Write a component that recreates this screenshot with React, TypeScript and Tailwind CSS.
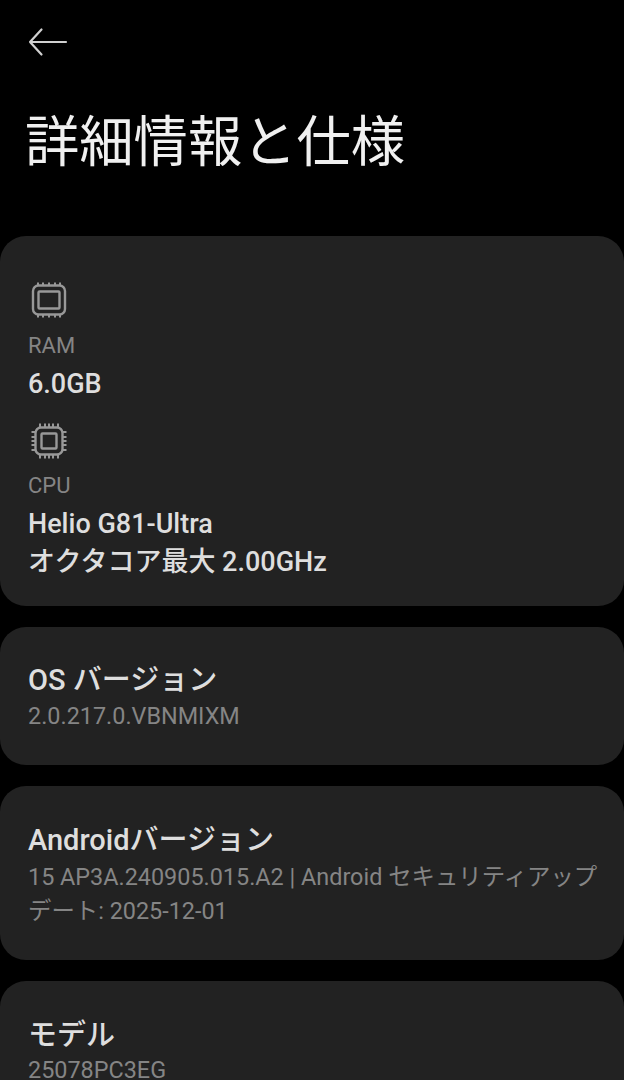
const FONT = "font-['Roboto','Noto_Sans_CJK_JP',sans-serif]";

// ── Inline SVG icons ──────────────────────────────────────────────────────────
function IconRam() {
  return (
    <svg viewBox="0 0 36 36" fill="none" className="w-9 h-9 block ml-[3px]" aria-hidden="true" stroke="#989898">
      <rect x="2" y="3.5" width="32" height="29" rx="5.5" strokeWidth="2.4" />
      <rect x="7.5" y="9.5" width="21" height="17" rx="1" strokeWidth="2.4" />
      <path d="M7 0.5v3M12 0.5v3M18 0.5v3M24 0.5v3M29 0.5v3M7 32.5v3M12 32.5v3M18 32.5v3M24 32.5v3M29 32.5v3" strokeWidth="2" />
    </svg>
  );
}

function IconCpu() {
  return (
    <svg viewBox="0 0 36 36" fill="none" className="w-9 h-9 block ml-[3px]" aria-hidden="true" stroke="#989898">
      <rect x="4.5" y="4.5" width="27" height="27" rx="5.5" strokeWidth="2.4" />
      <rect x="10.5" y="10.5" width="15" height="15" rx="1" strokeWidth="2.4" />
      <path d="M9 0.5v4M14 0.5v4M18 0.5v4M22 0.5v4M27 0.5v4M9 31.5v4M14 31.5v4M18 31.5v4M22 31.5v4M27 31.5v4M0.5 9h4M0.5 14h4M0.5 18h4M0.5 22h4M0.5 27h4M31.5 9h4M31.5 14h4M31.5 18h4M31.5 22h4M31.5 27h4" strokeWidth="2" />
    </svg>
  );
}

function Row({ title, sub, className, subClass }: { title: string; sub: string; className: string; subClass: string }) {
  return (
    <section className={`bg-[#222222] rounded-[26px] pl-7 pr-5 ${className}`}>
      <h2 className="text-[29px] leading-[36px] font-medium text-[#dedede]">{title}</h2>
      <p className={`text-[23.4px] leading-[34px] text-[#858585] ${subClass}`}>{sub}</p>
    </section>
  );
}

export default function App() {
  return (
    <div className={`${FONT} bg-black h-[1080px] overflow-hidden`}>
      <header className="px-7 pt-[27px]">
        <svg viewBox="0 0 40 30" fill="none" className="w-10 h-[30px] block" aria-hidden="true" stroke="#d0d0d0" strokeWidth="2.2" strokeLinecap="round" strokeLinejoin="round">
          <path d="M38 15H2M13.5 2.5 2 15l11.5 12.5" />
        </svg>
        <h1 className="text-[54.3px] leading-[64px] font-normal text-[#f0f0f0] mt-[54px] -ml-[3px]">詳細情報と仕様</h1>
      </header>

      <div className="flex flex-col gap-[21px] mt-[61px]">
        <section className="bg-[#222222] rounded-[26px] px-7 pt-[46px] h-[370px]">
          <IconRam />
          <p className="text-[22px] leading-[30px] text-[#858585] mt-[13px]">RAM</p>
          <p className="text-[27px] leading-[36px] font-medium text-[#dedede] mt-[5px]">6.0GB</p>
          <div className="mt-[21px]"><IconCpu /></div>
          <p className="text-[22px] leading-[30px] text-[#858585] mt-[12px]">CPU</p>
          <p className="text-[27px] leading-[38px] font-medium text-[#dedede] mt-[4px]">Helio G81-Ultra</p>
          <p className="text-[27px] leading-[38px] font-medium text-[#dedede]">オクタコア最大 2.00GHz</p>
        </section>

        <Row title="OS バージョン" sub="2.0.217.0.VBNMIXM" className="pt-[35px] h-[138px]" subClass="mt-[1px]" />
        <Row title="Androidバージョン" sub="15 AP3A.240905.015.A2 | Android セキュリティアップデート: 2025-12-01" className="pt-9 h-[174px]" subClass="mt-[2px]" />
        <Row title="モデル" sub="25078PC3EG" className="pt-9 h-[140px]" subClass="mt-0" />
      </div>
    </div>
  );
}
